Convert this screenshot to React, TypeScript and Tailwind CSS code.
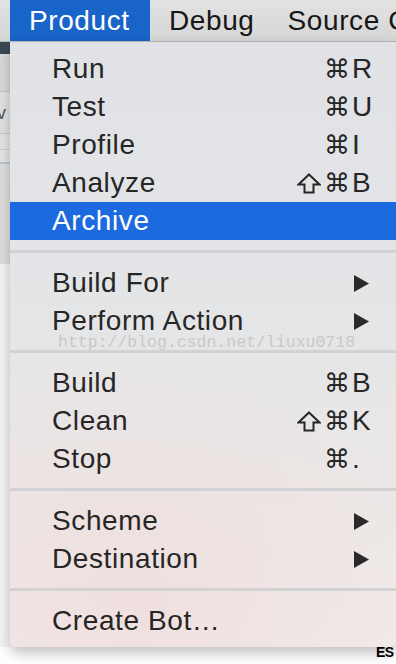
import React from "react";

type Item =
  | { kind: "item"; label: string; shift?: boolean; key?: string; sub?: boolean; active?: boolean }
  | { kind: "sep" };

const items: Item[] = [
  { kind: "item", label: "Run", key: "R" },
  { kind: "item", label: "Test", key: "U" },
  { kind: "item", label: "Profile", key: "I" },
  { kind: "item", label: "Analyze", shift: true, key: "B" },
  { kind: "item", label: "Archive", active: true },
  { kind: "sep" },
  { kind: "item", label: "Build For", sub: true },
  { kind: "item", label: "Perform Action", sub: true },
  { kind: "sep" },
  { kind: "item", label: "Build", key: "B" },
  { kind: "item", label: "Clean", shift: true, key: "K" },
  { kind: "item", label: "Stop", key: "." },
  { kind: "sep" },
  { kind: "item", label: "Scheme", sub: true },
  { kind: "item", label: "Destination", sub: true },
  { kind: "sep" },
  { kind: "item", label: "Create Bot…" },
];

function Arrow() {
  return (
    <svg width="17" height="19" viewBox="0 0 17 19" className="block">
      <polygon points="1,1 16,9.5 1,18" fill="#2a2a2a" />
    </svg>
  );
}

function ShiftIcon() {
  return (
    <svg width="24" height="21" viewBox="0 0 24 21" className="block mr-[3px]">
      <polygon
        points="12,1.5 22.5,11.5 16.5,11.5 16.5,19.5 7.5,19.5 7.5,11.5 1.5,11.5"
        fill="none"
        stroke="#262626"
        strokeWidth="2"
        strokeLinejoin="miter"
      />
    </svg>
  );
}

export default function App() {
  const font = { fontFamily: '"Liberation Sans", Arial, "DejaVu Sans", sans-serif' };
  return (
    <div className="w-[396px] h-[664px] overflow-hidden bg-white relative" style={font}>
      {/* menu bar */}
      <div className="h-[42px] flex items-stretch bg-gradient-to-b from-[#e2e2e2] to-[#d6d6d6] border-b border-[#b8b8b8] text-[28px] tracking-[0.6px] text-[#161616] whitespace-nowrap">
        <div className="w-[10px] shrink-0" />
        <div className="w-[140px] shrink-0 bg-[#1864c8] text-white pl-[19px] flex items-center">Product</div>
        <div className="pl-[19px] shrink-0 flex items-center">Debug</div>
        <div className="pl-[33px] shrink-0 flex items-center">Source Control</div>
      </div>

      <div className="flex">
        {/* left strip: background window */}
        <div className="w-[10px] shrink-0 flex flex-col">
          <div className="h-[12px] bg-[#3b4852]" />
          <div className="h-[38px] bg-[#dadada] border-b border-[#c4c4c4]" />
          <div className="h-[42px] bg-[#e2e2e2] border-b border-[#c8c8c8] relative overflow-hidden">
            <span className="absolute left-[-3px] top-[8px] text-[18px] text-[#555]">v</span>
          </div>
          <div className="h-[16px] bg-[#e4e4e4] border-b border-[#cfcfcf]" />
          <div className="h-[14px] bg-[#e6e6e6] border-b-[2px] border-[#b9c3cc]" />
          <div className="h-[100px] bg-[#dedede]" />
          <div className="flex-1 bg-[#f4f4f4]" />
        </div>

        {/* menu */}
        <div className="relative flex-1">
          <div
            className="w-[386px] rounded-b-[8px] pt-[8px] pb-[7px] text-[28px] tracking-[0.6px] text-[#262626] shadow-[0_6px_14px_rgba(0,0,0,0.25)]"
            style={{
              background:
                "radial-gradient(ellipse 300px 260px at 120px 560px, rgba(240,215,215,0.55), rgba(240,215,215,0) 100%), linear-gradient(180deg, #e0e2e5 0%, #e4e5e7 45%, #ece8e7 75%, #f0ebe9 100%)",
            }}
          >
            {items.map((it, i) =>
              it.kind === "sep" ? (
                <div key={i} className="h-[24px] pt-[10px]">
                  <div className="h-[3px] bg-[#d2d2d4]" />
                </div>
              ) : (
                <div
                  key={i}
                  className={
                    "h-[38px] flex items-center pl-[42px] " +
                    (it.sub ? "pr-[25px] " : "pr-[21px] ") +
                    (it.active ? "bg-[#1c6ae0] text-white" : "")
                  }
                >
                  <span className="flex-1 whitespace-nowrap">{it.label}</span>
                  {it.sub ? (
                    <span className="mr-[1px]">
                      <Arrow />
                    </span>
                  ) : it.key ? (
                    <span className="flex items-center">
                      {it.shift ? <ShiftIcon /> : null}
                      <span
                        className="pr-[2px] text-[#262626]"
                        style={{ fontFamily: '"DejaVu Sans", sans-serif', fontSize: "26px", letterSpacing: "0px" }}
                      >
                        ⌘
                      </span>
                      <span className="w-[23px]">{it.key}</span>
                    </span>
                  ) : null}
                </div>
              )
            )}
          </div>

          {/* watermark */}
          <div
            className="absolute left-[48px] top-[289px] text-[16.5px] text-[#c9c9c9] whitespace-nowrap pointer-events-none"
            style={{ fontFamily: '"Liberation Mono", "DejaVu Sans Mono", monospace' }}
          >
            http://blog.csdn.net/liuxu0718
          </div>
        </div>
      </div>

      {/* bottom-right fragment of underlying window */}
      <div className="absolute left-[376px] top-[645px] text-[14px] font-bold text-black leading-none tracking-[-0.5px]">
        ES
      </div>
    </div>
  );
}
